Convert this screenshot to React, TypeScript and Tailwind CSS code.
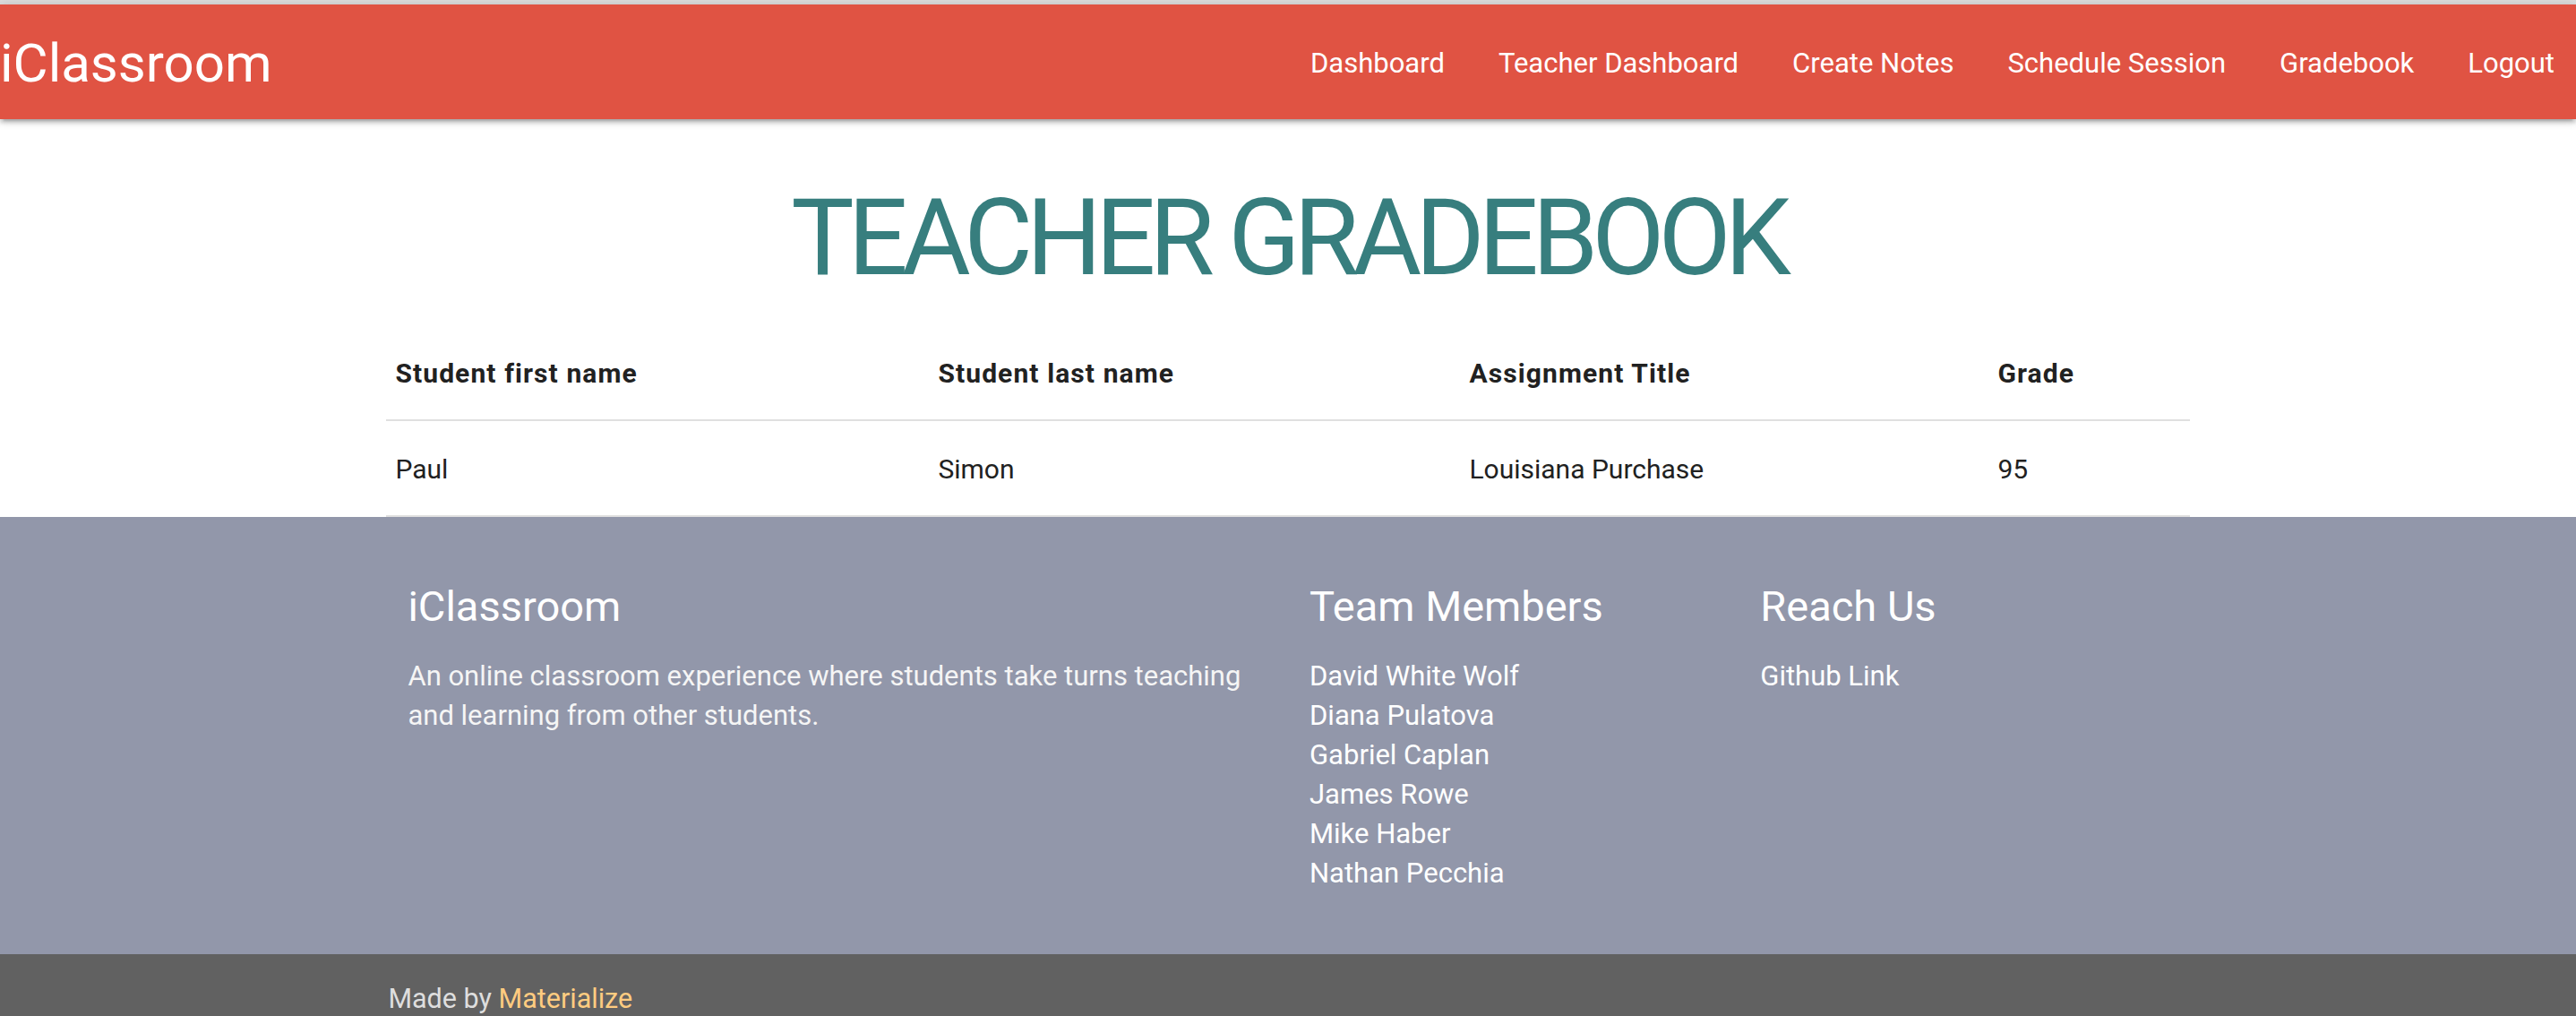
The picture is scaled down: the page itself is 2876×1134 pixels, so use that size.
import React from "react";

const navLinks = ["Dashboard", "Teacher Dashboard", "Create Notes", "Schedule Session", "Gradebook", "Logout"];

const members = ["David White Wolf", "Diana Pulatova", "Gabriel Caplan", "James Rowe", "Mike Haber", "Nathan Pecchia"];

const grades = [{ first: "Paul", last: "Simon", title: "Louisiana Purchase", grade: "95" }];

const App = () => {
  return (
    <div className="min-h-screen bg-white font-['Roboto',sans-serif] text-[#212121]">
      {/* top strip */}
      <div className="h-[5px] bg-[#dcdcdc]" />

      {/* Navbar */}
      <nav className="relative z-10 flex h-[128px] items-center justify-between bg-[#e05343] text-white shadow-[0_4px_4px_0_rgba(0,0,0,0.14),0_6px_2px_-4px_rgba(0,0,0,0.12),0_2px_10px_0_rgba(0,0,0,0.2)]">
        <a className="pt-[4px] text-[60px] leading-[124px]">iClassroom</a>
        <ul className="-mr-[6px] flex">
          {navLinks.map((link) => (
            <li key={link}>
              <a className="block px-[30px] pt-[4px] text-[31px] leading-[124px]">{link}</a>
            </li>
          ))}
        </ul>
      </nav>

      {/* Gradebook */}
      <main className="mx-auto w-[70%]">
        <h1 className="pt-[74px] pb-[38px] text-center text-[118px] leading-none tracking-[-7px] text-[#377e7e]">
          TEACHER GRADEBOOK
        </h1>
        <table className="w-full table-fixed border-collapse text-[30px] leading-[45px]">
          <colgroup>
            <col className="w-[606px]" />
            <col className="w-[593px]" />
            <col className="w-[590px]" />
            <col />
          </colgroup>
          <thead>
            <tr className="border-b-2 border-[#e0e0e0]">
              <th className="px-[10px] pt-[31px] pb-[29px] text-left font-bold tracking-[1.1px]">Student first name</th>
              <th className="px-[10px] pt-[31px] pb-[29px] text-left font-bold tracking-[1.1px]">Student last name</th>
              <th className="px-[10px] pt-[31px] pb-[29px] text-left font-bold tracking-[1.1px]">Assignment Title</th>
              <th className="px-[10px] pt-[31px] pb-[29px] text-left font-bold tracking-[1.1px]">Grade</th>
            </tr>
          </thead>
          <tbody>
            {grades.map((g) => (
              <tr key={g.first} className="border-b-2 border-[#e0e0e0]">
                <td className="px-[10px] pt-[31px] pb-[29px]">{g.first}</td>
                <td className="px-[10px] pt-[31px] pb-[29px]">{g.last}</td>
                <td className="px-[10px] pt-[31px] pb-[29px]">{g.title}</td>
                <td className="px-[10px] pt-[31px] pb-[29px]">{g.grade}</td>
              </tr>
            ))}
          </tbody>
        </table>
      </main>

      {/* Footer */}
      <footer className="bg-[#9297aa] text-white">
        <div className="mx-auto grid w-[70%] grid-cols-[2fr_1fr_1fr] pt-[40px] pb-[68px]">
          <div className="pr-[22.5px] pl-[24px]">
            <h5 className="mt-[33px] mb-[29px] text-[47px] leading-[54px]">iClassroom</h5>
            <p className="text-[31px] leading-[44px] text-[#f5f5f5]">
              An online classroom experience where students take turns teaching and learning from other students.
            </p>
          </div>
          <div className="pr-[22.5px] pl-[24px]">
            <h5 className="mt-[33px] mb-[29px] text-[47px] leading-[54px]">Team Members</h5>
            <ul className="text-[31px] leading-[44px]">
              {members.map((m) => (
                <li key={m}>{m}</li>
              ))}
            </ul>
          </div>
          <div className="pr-[22.5px] pl-[24px]">
            <h5 className="mt-[33px] mb-[29px] text-[47px] leading-[54px]">Reach Us</h5>
            <ul className="text-[31px] leading-[44px]">
              <li>
                <a>Github Link</a>
              </li>
            </ul>
          </div>
        </div>
        <div className="bg-[#616161]">
          <div className="mx-auto w-[70%] pl-[2px] text-[30.5px] leading-[100px] text-[#dedede]">
            Made by <a className="text-[#ffcc80]">Materialize</a>
          </div>
        </div>
      </footer>
    </div>
  );
};

export default App;
